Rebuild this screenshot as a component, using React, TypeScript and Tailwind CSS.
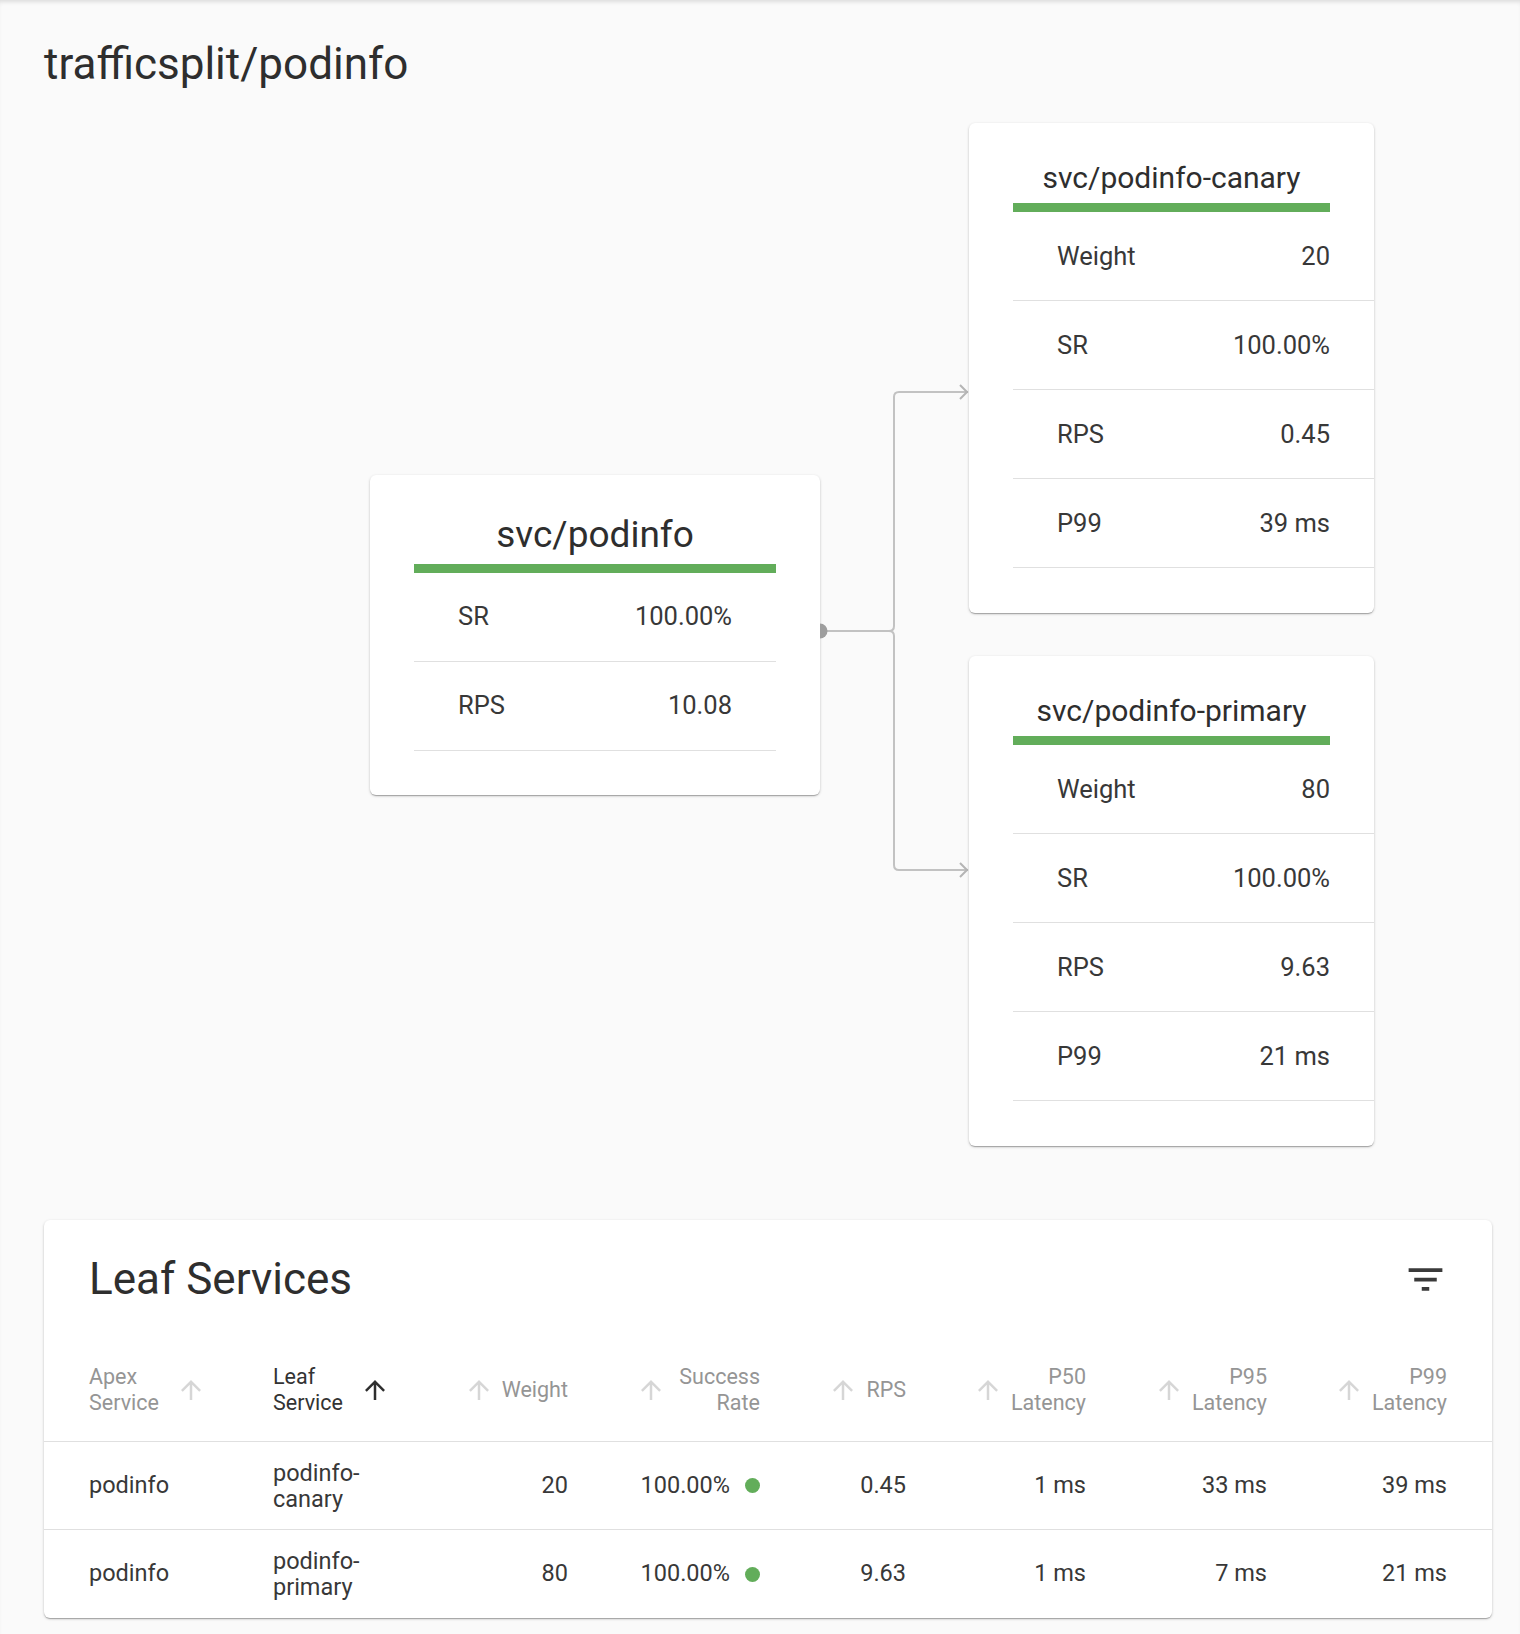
import React from "react";

const ArrowUp = ({ active = false }: { active?: boolean }) => (
  <svg
    viewBox="0 0 24 24"
    className={
      active
        ? "h-[30px] w-[30px] shrink-0 fill-[#2e2e2e]"
        : "h-[30px] w-[30px] shrink-0 fill-[#d6d6d6]"
    }
  >
    <path d="M4 12l1.41 1.41L11 7.83V20h2V7.83l5.58 5.59L20 12l-8-8-8 8z" />
  </svg>
);

const FilterIcon = () => (
  <svg viewBox="0 0 24 24" className="h-[45px] w-[45px] fill-[#3a3a3a]">
    <path d="M10 18h4v-2h-4v2zM3 6v2h18V6H3zm3 7h12v-2H6v2z" />
  </svg>
);

const MetricRow = ({ label, value }: { label: string; value: string }) => (
  <div className="flex h-[89px] items-center justify-between border-b border-[#e0e0e0] px-[44px] text-[25.5px] text-[#383838]">
    <span>{label}</span>
    <span>{value}</span>
  </div>
);

const ApexCard = () => (
  <div className="w-[450px] shrink-0 rounded-[6px] bg-white px-[44px] pt-[34px] pb-[44px] shadow-[0_1px_3px_rgba(0,0,0,0.2),0_1px_1px_rgba(0,0,0,0.14),0_2px_1px_-1px_rgba(0,0,0,0.12)]">
    <div className="text-center text-[37px] leading-[52px] text-[#2e2e2e]">
      svc/podinfo
    </div>
    <div className="mt-[3px] h-[9px] bg-[#62ad5a]" />
    <MetricRow label="SR" value="100.00%" />
    <MetricRow label="RPS" value="10.08" />
  </div>
);

const LeafCard = ({
  name,
  weight,
  sr,
  rps,
  p99,
}: {
  name: string;
  weight: string;
  sr: string;
  rps: string;
  p99: string;
}) => (
  <div className="w-[405px] overflow-hidden rounded-[6px] bg-white px-[44px] pt-[35px] pb-[45px] shadow-[0_1px_3px_rgba(0,0,0,0.2),0_1px_1px_rgba(0,0,0,0.14),0_2px_1px_-1px_rgba(0,0,0,0.12)]">
    <div className="text-center text-[30px] leading-[40px] text-[#2e2e2e]">
      {name}
    </div>
    <div className="mt-[5px] h-[9px] bg-[#62ad5a]" />
    <div className="w-[361px]">
      <MetricRow label="Weight" value={weight} />
      <MetricRow label="SR" value={sr} />
      <MetricRow label="RPS" value={rps} />
      <MetricRow label="P99" value={p99} />
    </div>
  </div>
);

// connector between the apex card and the two leaves
const Connector = () => (
  <svg width="149" height="1023" className="shrink-0" fill="none">
    <path
      d="M0 508 H69 Q74 508 74 503 V274 Q74 269 79 269 H148 M69 508 Q74 508 74 513 V742 Q74 747 79 747 H148"
      stroke="#c2c2c2"
      strokeWidth="2"
    />
    <path d="M140 262 L147 269 L140 276 M140 740 L147 747 L140 754" stroke="#b5b5b5" strokeWidth="2" />
    <circle cx="0" cy="508" r="7.5" fill="#9e9e9e" />
  </svg>
);

const cols =
  "grid grid-cols-[184px_190px_105px_192px_146px_180px_181px_180px] items-center px-[45px]";

const rows = [
  { apex: "podinfo", leaf: ["podinfo-", "canary"], weight: "20", sr: "100.00%", rps: "0.45", p50: "1 ms", p95: "33 ms", p99: "39 ms" },
  { apex: "podinfo", leaf: ["podinfo-", "primary"], weight: "80", sr: "100.00%", rps: "9.63", p50: "1 ms", p95: "7 ms", p99: "21 ms" },
];

const RightHead = ({ lines, wide = false }: { lines: string[]; wide?: boolean }) => (
  <div className={wide ? "flex items-center justify-end gap-[13px]" : "flex items-center justify-end gap-[8px]"}>
    <ArrowUp />
    <span className="text-right leading-[26px]">
      {lines.map((l, i) => (
        <div key={i}>{l}</div>
      ))}
    </span>
  </div>
);

const LeafServicesTable = () => (
  <div className="rounded-[6px] bg-white shadow-[0_1px_3px_rgba(0,0,0,0.2),0_1px_1px_rgba(0,0,0,0.14),0_2px_1px_-1px_rgba(0,0,0,0.12)]">
    <div className="flex h-[118px] items-center justify-between pl-[45px] pr-[44px]">
      <h2 className="text-[44px] leading-[52px] text-[#2e2e2e]">Leaf Services</h2>
      <FilterIcon />
    </div>

    <div className={`${cols} h-[104px] border-b border-[#e0e0e0] text-[21.5px] text-[#959595]`}>
      <div className="flex items-center gap-[17px]">
        <span className="leading-[26px]">
          Apex
          <br />
          Service
        </span>
        <ArrowUp />
      </div>
      <div className="flex items-center gap-[17px] text-[#333]">
        <span className="leading-[26px]">
          Leaf
          <br />
          Service
        </span>
        <ArrowUp active />
      </div>
      <RightHead lines={["Weight"]} />
      <RightHead lines={["Success", "Rate"]} wide />
      <RightHead lines={["RPS"]} />
      <RightHead lines={["P50", "Latency"]} />
      <RightHead lines={["P95", "Latency"]} />
      <RightHead lines={["P99", "Latency"]} />
    </div>

    {rows.map((r, i) => (
      <div
        key={i}
        className={`${cols} h-[88px] text-[23.5px] text-[#383838] ${
          i < rows.length - 1 ? "border-b border-[#e0e0e0]" : ""
        }`}
      >
        <div>{r.apex}</div>
        <div className="leading-[26px]">
          <div>{r.leaf[0]}</div>
          <div>{r.leaf[1]}</div>
        </div>
        <div className="text-right">{r.weight}</div>
        <div className="flex items-center justify-end gap-[15px]">
          <span>{r.sr}</span>
          <span className="h-[15px] w-[15px] rounded-full bg-[#62ad5a]" />
        </div>
        <div className="text-right">{r.rps}</div>
        <div className="text-right">{r.p50}</div>
        <div className="text-right">{r.p95}</div>
        <div className="text-right">{r.p99}</div>
      </div>
    ))}
  </div>
);

export default function App() {
  return (
    <div className="min-h-[1634px] bg-[#fafafa] pt-[38px] pl-[44px] pr-[28px] font-['Roboto',sans-serif] shadow-[inset_0_4px_4px_-2px_rgba(0,0,0,0.12)]">
      <h1 className="text-[44px] leading-[52px] text-[#2e2e2e]">trafficsplit/podinfo</h1>

      <div className="mt-[33px] flex items-center pl-[326px]">
        <ApexCard />
        <Connector />
        <div className="flex flex-col gap-[43px]">
          <LeafCard name="svc/podinfo-canary" weight="20" sr="100.00%" rps="0.45" p99="39 ms" />
          <LeafCard name="svc/podinfo-primary" weight="80" sr="100.00%" rps="9.63" p99="21 ms" />
        </div>
      </div>

      <div className="mt-[74px]">
        <LeafServicesTable />
      </div>
    </div>
  );
}
